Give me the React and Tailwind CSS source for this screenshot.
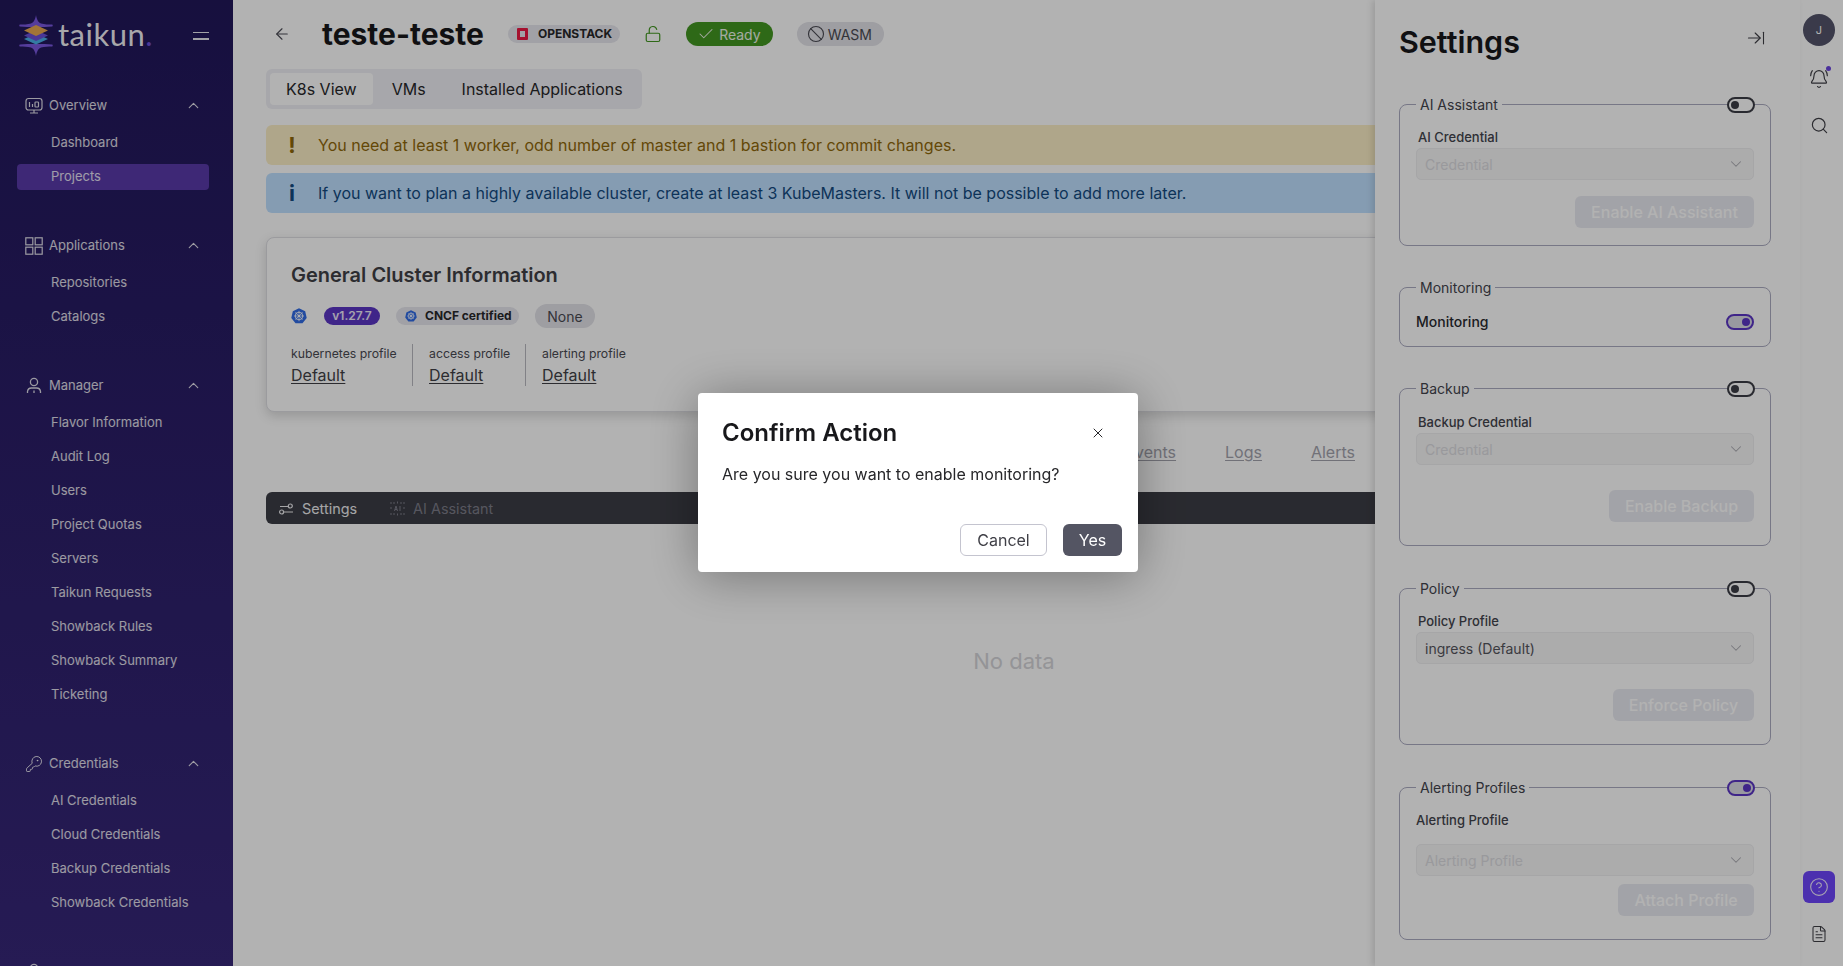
import React from "react";
import {
  ArrowLeft,
  ArrowRightToLine,
  Ban,
  BellRing,
  Check,
  ChevronDown,
  ChevronUp,
  CircleHelp,
  FileText,
  KeyRound,
  LockOpen,
  Search,
  X,
} from "lucide-react";

const OverviewIcon = () => (
  <svg width="18" height="18" viewBox="0 0 18 18" fill="none" stroke="currentColor" strokeWidth="1.2">
    <rect x="1" y="1.5" width="16" height="11.5" rx="2.5" />
    <path d="M4.5 5v5M7.5 7v3" />
    <rect x="10" y="5" width="3.5" height="5" rx="0.8" />
    <path d="M9 13v2.5M5 16h8" />
  </svg>
);

const AppsIcon = () => (
  <svg width="18" height="18" viewBox="0 0 18 18" fill="none" stroke="currentColor" strokeWidth="1.2">
    <rect x="0.8" y="0.8" width="7" height="7" />
    <rect x="10.2" y="0.8" width="7" height="7" />
    <rect x="0.8" y="10.2" width="7" height="7" />
    <rect x="10.2" y="10.2" width="7" height="7" />
  </svg>
);

const ManagerIcon = () => (
  <svg width="18" height="18" viewBox="0 0 18 18" fill="none" stroke="currentColor" strokeWidth="1.3">
    <circle cx="9" cy="5" r="3.6" />
    <path d="M2.5 16v-1.5a4 4 0 0 1 4-3.5h5a4 4 0 0 1 4 3.5V16M9 13.5V16" />
  </svg>
);

const SlidersIcon = () => (
  <svg width="15" height="12" viewBox="0 0 15 12" fill="none" stroke="currentColor" strokeWidth="1.2">
    <path d="M1 3.5h8M4.5 9H14" />
    <circle cx="11.3" cy="3" r="2" />
    <circle cx="2.6" cy="9" r="2" />
  </svg>
);

const AiIcon = () => (
  <svg width="15" height="15" viewBox="0 0 15 15" fill="none" stroke="currentColor" strokeWidth="1">
    <path d="M1 1v2M1 6v3M1 12v2M14 1v2M14 6v3M14 12v2M4 1v2M11 1v2M4 12v2M11 12v2M7.5 0.5v2M7.5 12.500v2" strokeDasharray="2 1" />
    <path d="M4.500 10l1.500-5 1.500 5M5 8.500h2M10 5v5" />
  </svg>
);

const KubeIcon = ({ size = 16 }) => (
  <svg width={size} height={size} viewBox="0 0 16 16" fill="none">
    <path d="M8 0.300 14.200 3.300 15.700 9.900 11.500 15.300H4.500L0.300 9.900 1.800 3.300Z" fill="#326ce5" />
    <circle cx="8" cy="8" r="3.800" stroke="#fff" strokeWidth="0.9" />
    <path d="M8 2.800v10.400M3 8h10M4.400 4.400l7.200 7.200M11.600 4.400l-7.200 7.200" stroke="#fff" strokeWidth="0.7" />
    <circle cx="8" cy="8" r="1.100" fill="#fff" />
  </svg>
);

const Logo = () => (
  <svg width="34" height="42" viewBox="0 0 34 42" fill="none">
    <path d="M17 0c.8 5 2.500 7.500 5 8.500 3.500 1 7.500 1 11 1 1 0 1 2 0 2-5 .5-9.500.5-16 .5S6 12 1 11.500c-1 0-1-2 0-2 3.500 0 7.500 0 11-1 2.500-1 4.200-3.500 5-8.500Z" fill="#7a58e0" />
    <path d="M17 41c.8-5 2.500-7.500 5-8.500 3.500-1 7.500-1 11-1 1 0 1-2 0-2-5-.5-9.500-.5-16-.5s-11 0-16 .5c-1 0-1 2 0 2 3.500 0 7.500 0 11 1 2.500 1 4.200 3.500 5 8.500Z" fill="#7a58e0" />
    <path d="M17 18.500 29 24 17 29.500 5 24Z" fill="#4bb0e8" />
    <path d="M17 15 29 20.500 17 26 5 20.500Z" fill="#6a4fd8" />
    <path d="M17 10 29 15.500 17 21 5 15.500Z" fill="#e8a850" />
  </svg>
);

const sections = [
  { id: "overview", title: "Overview", icon: <OverviewIcon />, items: ["Dashboard", "Projects"] },
  { id: "applications", title: "Applications", icon: <AppsIcon />, items: ["Repositories", "Catalogs"] },
  {
    id: "manager",
    title: "Manager",
    icon: <ManagerIcon />,
    items: [
      "Flavor Information",
      "Audit Log",
      "Users",
      "Project Quotas",
      "Servers",
      "Taikun Requests",
      "Showback Rules",
      "Showback Summary",
      "Ticketing",
    ],
  },
  {
    id: "credentials",
    title: "Credentials",
    icon: <KeyRound size={18} strokeWidth={1.3} />,
    items: ["AI Credentials", "Cloud Credentials", "Backup Credentials", "Showback Credentials"],
  },
  { id: "next", title: "", icon: <ManagerIcon />, items: [] },
];

const Sidebar = () => (
  <aside className="w-[233px] h-screen shrink-0 overflow-hidden bg-gradient-to-b from-[#21175a] to-[#372779] text-white/85">
    <div className="flex items-center h-[71px] pl-[19px] pr-[24px]">
      <Logo />
      <span className="ml-[5px] -mt-[2px] font-['Lato',sans-serif] text-[31px] leading-none tracking-[0.5px] text-white/95">
        taikun<span className="text-[#6a4fd8]">.</span>
      </span>
      <div className="ml-auto flex flex-col gap-[5px]">
        <div className="w-[16px] h-[1.5px] bg-white/90" />
        <div className="w-[16px] h-[1.5px] bg-white/90" />
      </div>
    </div>
    <div className="pt-[18px]">
      {sections.map((s) => (
        <div key={s.id} className="mb-[35px] pl-[17px] pr-[24px]">
          <div className="flex items-center h-[34px] mb-[3px] text-[13px]">
            <span className="w-[18px] ml-[8px] flex justify-center">{s.icon}</span>
            <span className="ml-[6px]">{s.title}</span>
            {s.items.length > 0 && <ChevronUp size={17} strokeWidth={1.6} className="ml-auto mr-[7px] -mt-[1px]" />}
          </div>
          {s.items.map((item) => (
            <div key={item} className="h-[34px] flex items-center text-[13px]">
              <div
                className={
                  item === "Projects"
                    ? "w-full h-[26px] flex items-center pl-[34px] rounded bg-[#593aaa]"
                    : "w-full h-[26px] flex items-center pl-[34px]"
                }
              >
                {item}
              </div>
            </div>
          ))}
        </div>
      ))}
    </div>
  </aside>
);

const Profile = ({ label, className }) => (
  <div className={className}>
    <div className="text-[12.25px] leading-[19px] text-[#4a4a52]">{label}</div>
    <div className="text-[16px] leading-[24px] font-normal underline underline-offset-2 text-[#3f3f46]">Default</div>
  </div>
);

const Main = () => (
  <main className="flex-1 min-w-0 h-screen overflow-hidden bg-white">
    <div className="w-[1503px] ml-[33px] pt-[16px]">
      <div className="flex items-center h-[36px]">
        <ArrowLeft size={18} strokeWidth={1.5} className="ml-[7px] text-[#4b4b55]" />
        <h1 className="ml-[31px] text-[30px] font-bold text-[#18181b] leading-none">teste-teste</h1>
        <div className="ml-[24px] flex items-center h-[18px] pl-[9px] pr-[8px] gap-[10px] rounded-full bg-[#e7e7ee] text-[12px] font-bold text-[#27272a]">
          <span className="w-[11px] h-[12px] border-[3px] border-[#ed1944] rounded-[1px]" />
          OPENSTACK
        </div>
        <LockOpen size={18} strokeWidth={1.6} className="ml-[24px] text-[#439722]" />
        <div className="ml-[24px] flex items-center h-[24px] pl-[11px] pr-[12px] gap-[4px] rounded-full bg-[#439722] text-[14px] text-white/90">
          <Check size={18} strokeWidth={1.4} />
          Ready
        </div>
        <div className="ml-[24px] flex items-center h-[24px] pl-[10px] pr-[12px] gap-[3px] rounded-full bg-[#e2e2e8] text-[14px] text-[#4a4a52]">
          <Ban size={18} strokeWidth={1.5} />
          WASM
        </div>
      </div>

      <div className="mt-[17px] inline-flex items-center h-[40px] px-[4px] rounded-md bg-[#f0f0f5] text-[16px] text-[#27272a]">
        <div className="h-[32px] px-[16px] flex items-center justify-center rounded bg-white">K8s View</div>
        <div className="ml-[19px]">VMs</div>
        <div className="ml-[36px] mr-[15px]">Installed Applications</div>
      </div>

      <div className="mt-[16px] flex items-center h-[40px] rounded-md bg-[#fbeec6] text-[16px] text-[#8f670a]">
        <span className="w-[52px] text-center text-[22px] font-bold leading-none">!</span>
        You need at least 1 worker, odd number of master and 1 bastion for commit changes.
      </div>
      <div className="mt-[8px] flex items-center h-[40px] rounded-md bg-[#bfe0ff] text-[16px] text-[#134a80]">
        <span className="w-[52px] text-center text-[22px] font-bold leading-none">i</span>
        If you want to plan a highly available cluster, create at least 3 KubeMasters. It will not be possible to add more later.
      </div>

      <div className="mt-[24px] h-[175px] rounded-lg border border-[#dedee3] bg-white shadow-[0_4px_12px_rgba(0,0,0,0.16)] pl-[24px] pt-[23px]">
        <h2 className="text-[20px] leading-[28px] font-semibold text-[#3f3f46]">General Cluster Information</h2>
        <div className="mt-[15px] flex items-center h-[24px]">
          <KubeIcon />
          <span className="ml-[17px] h-[18px] w-[56px] flex items-center justify-center rounded-full bg-[#5b36c4] text-[12px] font-semibold text-white/90">
            v1.27.7
          </span>
          <span className="ml-[16px] h-[18px] w-[123px] flex items-center rounded-full bg-[#e7e7ee] pl-[9px] text-[12px] font-bold text-[#27272a]">
            <KubeIcon size={12} />
            <span className="ml-[8px]">CNCF certified</span>
          </span>
          <span className="ml-[16px] h-[24px] w-[60px] flex items-center justify-center rounded-full bg-[#e2e2e8] text-[14px] text-[#4a4a52]">
            None
          </span>
        </div>
        <div className="mt-[16px] flex items-stretch h-[42px]">
          <Profile label="kubernetes profile" className="w-[121px]" />
          <Profile label="access profile" className="w-[113px] pl-[16px] border-l border-[#b9b9c0]" />
          <Profile label="alerting profile" className="pl-[16px] border-l border-[#b9b9c0]" />
        </div>
      </div>

      <div className="mt-[28px] w-[1089px] flex justify-end gap-[49px] text-[16px] leading-[24px] text-[#a3a3ad] underline underline-offset-2">
        <span>Events</span>
        <span>Logs</span>
        <span>Alerts</span>
      </div>

      <div className="mt-[28px] h-[32px] flex items-center rounded-md bg-[#3c3d45] text-[14.4px] pt-[1px]">
        <span className="ml-[13px] text-[#ededf0]"><SlidersIcon /></span>
        <span className="ml-[8px] text-[#ededf0]">Settings</span>
        <span className="ml-[33px] text-[#7b7c88]"><AiIcon /></span>
        <span className="ml-[8px] text-[#7b7c88]">AI Assistant</span>
      </div>

      <div className="mt-[122px] pr-[7px] text-center text-[22px] leading-[30px] text-[#d4d4d8]">No data</div>
    </div>
  </main>
);

const Toggle = ({ on, floating }) => (
  <div
    className={
      (floating ? "absolute right-[15px] -top-[17px] " : "") +
      (on
        ? "w-[28px] h-[16px] rounded-full border-2 border-[#5b36c4] bg-[#dcdce6] flex items-center justify-end pr-[2px]"
        : "w-[28px] h-[16px] rounded-full border-2 border-[#3c3d45] bg-white flex items-center pl-[2px]")
    }
  >
    <div className={on ? "w-[8px] h-[8px] rounded-full bg-[#5b36c4]" : "w-[8px] h-[8px] rounded-full bg-[#3c3d45]"} />
  </div>
);

const Select = ({ value, filled }) => (
  <div className="h-[32px] flex items-center justify-between pl-[8px] pr-[8px] rounded-[5px] border border-[#eeeef0] bg-[#f6f6f7] text-[14px]">
    <span className={filled ? "text-[#55555c]" : "text-[#dcdce0]"}>{value}</span>
    <ChevronDown size={18} strokeWidth={1.4} className="text-[#acacb2]" />
  </div>
);

const ActionButton = ({ children, className }) => (
  <div className={"self-end h-[32px] flex items-center justify-center rounded-md bg-[#e9eaf1] text-[16px] font-medium text-white " + className}>
    {children}
  </div>
);

const Fieldset = ({ title, toggle, children, className }) => (
  <fieldset className={"relative block w-[372px] rounded-lg border border-[#ababc1] px-[16px] " + className}>
    <legend className="relative top-[1px] px-[4px] text-[14px] leading-[20px] text-[#43444d]">{title}</legend>
    {toggle}
    {children}
  </fieldset>
);

const Label = ({ children, className }) => (
  <div className={"text-[13px] leading-[16px] font-medium text-[#43444d] " + className}>{children}</div>
);

const SettingsPanel = () => (
  <section className="relative w-[425px] h-screen shrink-0 overflow-hidden bg-white pl-[24px] shadow-[-3px_0_6px_rgba(0,0,0,0.12)]">
    <div className="flex items-center justify-between h-[94px] pr-[34px] pb-[10px]">
      <h2 className="text-[30.5px] font-semibold leading-none text-[#18181b]">Settings</h2>
      <ArrowRightToLine size={20} strokeWidth={1.3} className="-mt-[8px] text-[#3f3f46]" />
    </div>

    <Fieldset title="AI Assistant" toggle={<Toggle floating />} className="h-[152px]">
      <div className="flex flex-col">
        <Label className="mt-[15px] mb-[3px] ml-[2px]">AI Credential</Label>
        <Select value="Credential" />
        <ActionButton className="mt-[16px] w-[179px]">Enable AI Assistant</ActionButton>
      </div>
    </Fieldset>

    <Fieldset title="Monitoring" className="mt-[31px] h-[70px]">
      <div className="mt-[14px] flex items-center justify-between text-[14px] font-medium text-[#2a2a30]">
        Monitoring
        <Toggle on />
      </div>
    </Fieldset>

    <Fieldset title="Backup" toggle={<Toggle floating />} className="mt-[31px] h-[168px]">
      <div className="flex flex-col">
        <Label className="mt-[16px] mb-[3px] ml-[2px]">Backup Credential</Label>
        <Select value="Credential" />
        <ActionButton className="mt-[25px] w-[145px]">Enable Backup</ActionButton>
      </div>
    </Fieldset>

    <Fieldset title="Policy" toggle={<Toggle floating />} className="mt-[32px] h-[167px]">
      <div className="flex flex-col">
        <Label className="mt-[15px] mb-[3px] ml-[2px]">Policy Profile</Label>
        <Select value="ingress (Default)" filled />
        <ActionButton className="mt-[25px] w-[141px]">Enforce Policy</ActionButton>
      </div>
    </Fieldset>

    <Fieldset title="Alerting Profiles" toggle={<Toggle floating on />} className="mt-[32px] h-[163px]">
      <div className="flex flex-col">
        <Label className="mt-[15px] mb-[16px]">Alerting Profile</Label>
        <Select value="Alerting Profile" />
        <ActionButton className="mt-[8px] w-[136px]">Attach Profile</ActionButton>
      </div>
    </Fieldset>
  </section>
);

const Rail = () => (
  <div className="w-[43px] h-screen shrink-0 flex flex-col items-center bg-white pr-[5px] pt-[14px] pb-[23px] text-[#3f3f46]">
    <div className="w-[32px] h-[32px] rounded-full bg-[#53546a] flex items-center justify-center text-[11px] text-white">J</div>
    <div className="relative mt-[23px]">
      <BellRing size={20} strokeWidth={1.4} />
      <div className="absolute -top-[3px] -right-[2px] w-[5px] h-[5px] rounded-full bg-[#6b45e0]" />
    </div>
    <Search size={19} strokeWidth={1.5} className="mt-[27px]" />
    <div className="mt-auto w-[32px] h-[32px] rounded-md bg-[#6e45fb] flex items-center justify-center text-white/90">
      <CircleHelp size={20} strokeWidth={1.3} />
    </div>
    <FileText size={18} strokeWidth={1.4} className="mt-[22px]" />
  </div>
);

const ConfirmModal = () => (
  <div className="fixed inset-0 z-50 flex items-center justify-center pr-[7px] pb-[1px] bg-black/30">
    <div className="w-[440px] h-[179px] rounded bg-white shadow-[0_4px_50px_rgba(0,0,0,0.35)] pl-[24px] pr-[16px] pt-[25px] flex flex-col">
      <div className="flex items-center justify-between h-[30px]">
        <h3 className="text-[24px] font-semibold leading-none text-[#18181b]">Confirm Action</h3>
        <X size={16} strokeWidth={1.5} className="mr-[16px] text-[#27272a]" />
      </div>
      <p className="mt-[14px] text-[16px] leading-[24px] text-[#27272a]">Are you sure you want to enable monitoring?</p>
      <div className="mt-auto mb-[16px] flex justify-end gap-[16px]">
        <button className="w-[87px] h-[32px] rounded-md border border-[#c4c4cf] bg-white text-[16px] text-[#3f3f46]">Cancel</button>
        <button className="w-[59px] h-[32px] rounded-md bg-[#545563] text-[16px] text-white">Yes</button>
      </div>
    </div>
  </div>
);

export default function App() {
  return (
    <div className="flex h-screen overflow-hidden font-['Inter',sans-serif]">
      <Sidebar />
      <Main />
      <SettingsPanel />
      <Rail />
      <ConfirmModal />
    </div>
  );
}
